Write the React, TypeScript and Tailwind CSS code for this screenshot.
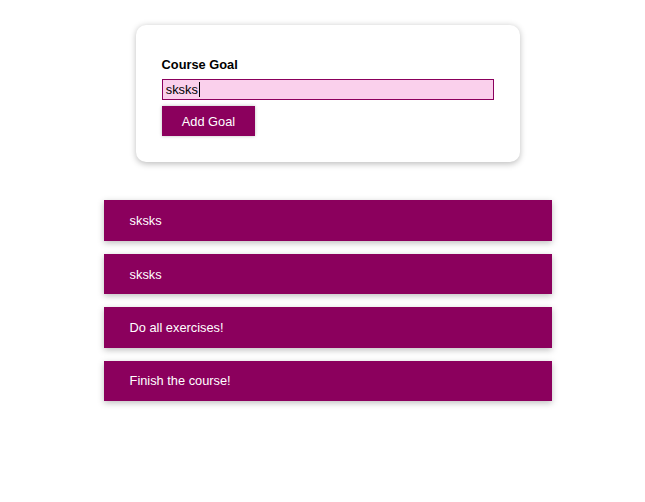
import { useState } from "react";

type Goal = {
  id: string;
  text: string;
};

const INITIAL_GOALS: Goal[] = [
  { id: "g4", text: "sksks" },
  { id: "g3", text: "sksks" },
  { id: "g1", text: "Do all exercises!" },
  { id: "g2", text: "Finish the course!" },
];

function CourseInput({ value }: { value: string }) {
  return (
    <form className="mx-auto box-border w-[384px] rounded-[10px] bg-white p-[25.6px] shadow-[0_1.6px_6.4px_rgba(0,0,0,0.26)]">
      <div className="my-[6.4px]">
        <label className="mb-[7px] block font-bold leading-[15px] text-black">Course Goal</label>
        <div className="box-border flex h-[21px] w-full items-center border border-[#8b005d] bg-[#fad0ec] px-[3.2px] leading-[19px] text-black">
          <span>{value}</span>
          <span className="ml-px inline-block h-[15px] w-px bg-black" />
        </div>
      </div>
      <button
        type="button"
        className="box-border h-[30px] border border-[#8b005d] bg-[#8b005d] px-[19.2px] leading-[15px] text-white shadow-[0_0_3.2px_rgba(0,0,0,0.26)]"
      >
        Add Goal
      </button>
    </form>
  );
}

function GoalList({ goals }: { goals: Goal[] }) {
  return (
    <ul className="mx-auto flex w-[448px] flex-col gap-[12.8px]">
      {goals.map((goal) => (
        <li
          key={goal.id}
          className="h-[40.6px] bg-[#8b005d] px-[25.6px] py-[12.8px] leading-[15px] text-white shadow-[0_1.6px_6.4px_rgba(0,0,0,0.26)]"
        >
          {goal.text}
        </li>
      ))}
    </ul>
  );
}

export default function App() {
  const [goals] = useState(INITIAL_GOALS);

  return (
    <div className="min-h-[502px] bg-white pl-[11px] pt-[25px] font-['Liberation_Sans',Arial,sans-serif] text-[12.8px]">
      <CourseInput value="sksks" />
      <section className="mt-[38.4px]">
        <GoalList goals={goals} />
      </section>
    </div>
  );
}
